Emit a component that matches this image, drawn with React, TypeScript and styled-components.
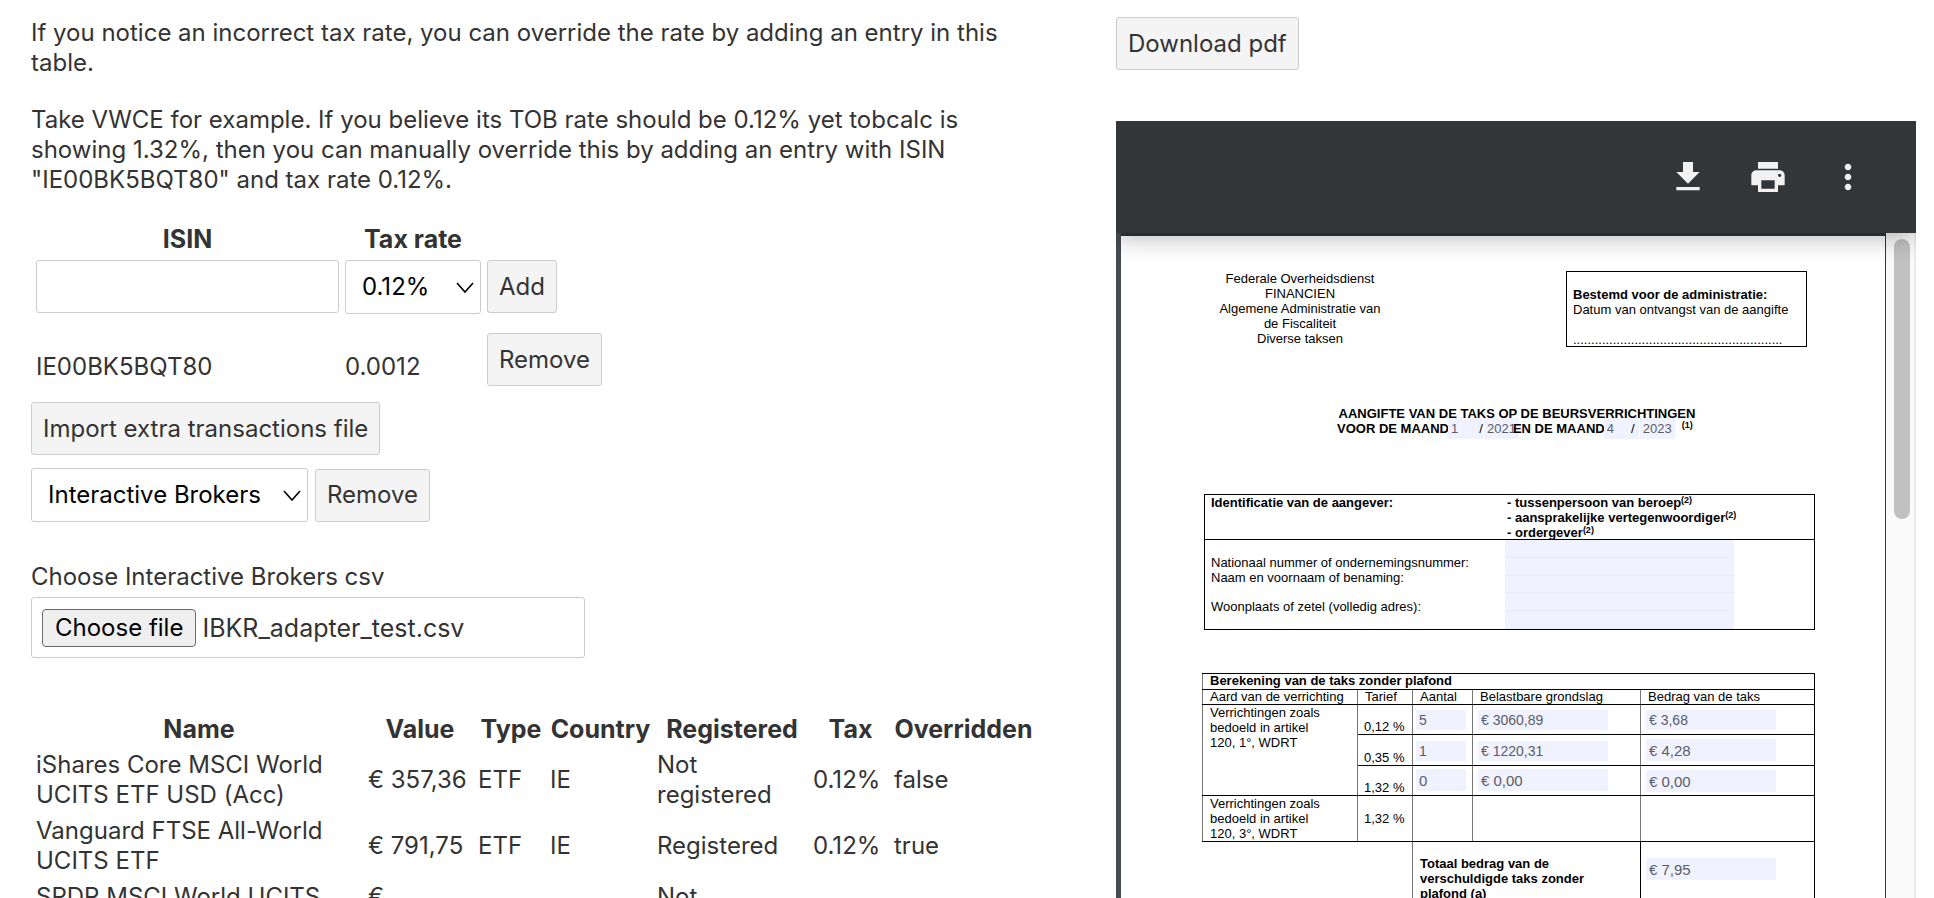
import React from "react";
import styled, { createGlobalStyle, css } from "styled-components";

const GlobalStyle = createGlobalStyle`
  *, *::before, *::after { box-sizing: border-box; }
  body {
    margin: 0;
    background: #fff;
    color: #333;
    font-family: Inter, "Liberation Sans", sans-serif;
    font-size: 24px;
    line-height: 30px;
  }
  th { font-size: 25px; }
`;

const Page = styled.main`
  display: grid;
  grid-template-columns: minmax(0, 1007fr) minmax(0, 800fr);
  column-gap: 78px;
  height: 100vh;
  padding: 0 18px 0 31px;
  overflow: hidden;
`;

const Column = styled.section<{ $top: number }>`
  display: flex;
  flex-direction: column;
  align-items: flex-start;
  min-width: 0;
  min-height: 0;
  padding-top: ${(p) => p.$top}px;
`;

const Paragraph = styled.p`
  margin: 0 0 27px;
`;

const controlBox = css`
  height: 53px;
  border: 1px solid #ccc;
  border-radius: 3px;
  font: inherit;
`;

const Button = styled.button`
  ${controlBox}
  flex: none;
  padding: 0 11px;
  background: #f4f4f4;
  color: #333;
  white-space: nowrap;
`;

const TextInput = styled.input`
  ${controlBox}
  display: block;
  width: 303px;
  padding: 0 10px;
  background: #fff;
`;

const SelectWrap = styled.span<{ $width: number }>`
  position: relative;
  display: block;
  width: ${(p) => p.$width}px;
`;

const SelectBox = styled.select`
  ${controlBox}
  display: block;
  width: 100%;
  height: 54px;
  padding: 0 16px;
  appearance: none;
  background: #fff;
  color: #000;
`;

const Chevron = styled.svg`
  position: absolute;
  top: 22px;
  right: 7px;
  width: 18px;
  height: 12px;
  fill: none;
  stroke: #000;
  stroke-width: 1.6;
  pointer-events: none;
`;

function Select({ width, label, options }: { width: number; label: string; options: string[] }) {
  return (
    <SelectWrap $width={width}>
      <SelectBox aria-label={label} defaultValue={options[0]}>
        {options.map((o) => (
          <option key={o}>{o}</option>
        ))}
      </SelectBox>
      <Chevron viewBox="0 0 18 12">
        <path d="M1 1 9 10 17 1" />
      </Chevron>
    </SelectWrap>
  );
}

const OverrideTable = styled.table`
  border-spacing: 4px;
  margin: -3px 0 0 0;
  th, td { padding: 1px; text-align: left; }
  th { text-align: center; }
  tbody td { height: 69px; }
  tbody tr:first-child td { vertical-align: top; }
  tbody tr:last-child td { height: 66px; }
`;

const EntryCell = styled.td`
  && { padding-top: 5px; }
`;

const ActionCell = styled.td`
  vertical-align: top;
  button { display: block; }
`;

const BrokerRow = styled.div`
  display: flex;
  align-items: center;
  gap: 7px;
  margin: 13px 0 40px;
`;

const FieldCaption = styled.label`
  margin-bottom: 5px;
`;

const HiddenFile = styled.input`
  position: absolute;
  opacity: 0;
  width: 1px;
  height: 1px;
`;

const FileBox = styled.label`
  display: flex;
  flex: none;
  align-items: center;
  gap: 6px;
  width: 554px;
  height: 61px;
  padding: 0 10px;
  border: 1px solid #ccc;
  border-radius: 3px;
  font-size: 25px;
`;

const FileButton = styled.span`
  height: 38px;
  padding: 3px 12px;
  border: 1px solid #6b6b6b;
  border-radius: 4px;
  background: #efefef;
  color: #000;
  font-size: 24px;
`;

const TransactionTable = styled.table`
  width: 100%;
  margin-top: 51px;
  table-layout: fixed;
  border-spacing: 4px;
  th, td { padding: 1px; text-align: left; }
  th { text-align: center; white-space: nowrap; }
  td:first-child { padding-right: 24px; }
`;

const Col = styled.col<{ $width?: number }>`
  width: ${(p) => (p.$width ? `${p.$width}px` : "auto")};
`;

/* PDF viewer */

const Viewer = styled.div`
  display: flex;
  flex-direction: column;
  flex: 1;
  width: 100%;
  min-height: 0;
  margin-top: 51px;
  overflow: hidden;
  background: #474c50;
`;

const Toolbar = styled.div`
  display: flex;
  position: relative;
  justify-content: flex-end;
  align-items: center;
  flex: none;
  gap: 40px;
  height: 112px;
  padding-right: 48px;
  background: #323639;
  box-shadow: 0 4px 24px rgba(0, 0, 0, 0.3);
`;

const IconButton = styled.button`
  width: 40px;
  height: 40px;
  padding: 0;
  border: 0;
  background: none;
  svg { display: block; fill: #f1f1f1; }
`;

const ViewerBody = styled.div`
  display: flex;
  flex: 1;
  min-height: 0;
  overflow: hidden;
`;

const Sheet = styled.article`
  flex: 1;
  min-width: 0;
  height: 1100px;
  margin-left: 5px;
  padding: 35px 70px 0 81px;
  border-top: 3px solid #323639;
  border-right: 1px solid #323639;
  background: #fff;
  color: #000;
  font-family: "Liberation Sans", Arial, sans-serif;
  font-size: 13px;
  line-height: 15px;
`;

const ScrollTrack = styled.div`
  flex: none;
  width: 30px;
  padding: 6px 6px 0 8px;
  border-right: 2px solid #ebebeb;
  background: #fafafa;
`;

const ScrollThumb = styled.div`
  width: 16px;
  height: 280px;
  border-radius: 8px;
  background: #c1c1c1;
`;

const Letterhead = styled.header`
  display: flex;
  justify-content: space-between;
  align-items: flex-start;
  padding: 0 8px 0 13px;
`;

const Sender = styled.address`
  width: 170px;
  font-style: normal;
  text-align: center;
`;

const AdminBox = styled.div`
  width: 241px;
  height: 76px;
  padding: 15px 6px 0;
  border: 1px solid #000;
  white-space: nowrap;
`;

const Dots = styled.div`
  margin-top: 15px;
`;

const TitleBlock = styled.h2`
  display: flex;
  flex-direction: column;
  align-items: center;
  margin: 59px 0 58px;
  padding-left: 17px;
  font-size: 13px;
  line-height: 15px;
  white-space: nowrap;
`;

const Period = styled.div`
  display: flex;
  align-items: flex-start;
  gap: 1px;
  width: 360px;
  height: 15px;
`;

const PeriodText = styled.span<{ $overlap?: boolean }>`
  position: relative;
  margin-left: ${(p) => (p.$overlap ? "-7px" : "0")};
  margin-right: -2px;
`;

const PeriodField = styled.span`
  position: relative;
  width: 35px;
  margin-top: -3px;
`;

const Slash = styled.span<{ $inset?: boolean }>`
  position: absolute;
  right: ${(p) => (p.$inset ? 4 : 0)}px;
  top: 3px;
  font-weight: 400;
`;

const Input = styled.input<{ $size?: number; $width?: string; $height?: number }>`
  display: block;
  width: ${(p) => p.$width ?? "100%"};
  height: ${(p) => p.$height ?? 21}px;
  padding: 0 3px;
  border: 0;
  border-radius: 0;
  background: #f0f2ff;
  color: #5a5c68;
  font-family: "Liberation Sans", Arial, sans-serif;
  font-size: ${(p) => p.$size ?? 13}px;
`;

const NoteRef = styled.sup`
  font-size: 9px;
  line-height: 9px;
  vertical-align: 4px;
`;

const PeriodNote = styled.sup`
  margin-left: 6px;
  font-size: 9px;
  line-height: 9px;
`;

const Identity = styled.section`
  margin-left: 2px;
  border: 1px solid #000;
`;

const IdentityRow = styled.div<{ $ruled?: boolean }>`
  display: grid;
  grid-template-columns: 294px 229px;
  padding-left: 6px;
  border-bottom: ${(p) => (p.$ruled ? "1px solid #000" : "0")};
  font-weight: ${(p) => (p.$ruled ? 700 : 400)};
`;

const Roles = styled.ul`
  margin: 0;
  padding: 0 0 0 2px;
  list-style: none;
  white-space: nowrap;
  li { height: 15px; }
  li:last-child { height: 14px; }
`;

const Labels = styled.div`
  display: flex;
  flex-direction: column;
  padding: 15px 0;
  label:last-child { margin-top: 14px; }
`;

const Lines = styled.div`
  display: flex;
  flex-direction: column;
  height: 89px;
  input { border-bottom: 1px solid #e9ebfd; }
`;

const TaxTable = styled.table`
  width: 100%;
  margin-top: 43px;
  table-layout: fixed;
  border-collapse: collapse;
  th, td {
    padding: 0 5px 0 7px;
    border: 1px solid #777;
    border-top-color: #000;
    border-bottom-color: #000;
    text-align: left;
    font-size: 13px;
    font-weight: 400;
    vertical-align: top;
    white-space: nowrap;
  }
  thead th { line-height: 14px; }
  thead th[colspan] { font-weight: 700; }
  th:last-child, td:last-child { border-right-color: #000; }
`;

const TaxRow = styled.tr<{ $height: number }>`
  height: ${(p) => p.$height}px;
`;

const RateCell = styled.td<{ $middle?: boolean }>`
  && {
    padding-left: 6px;
    vertical-align: ${(p) => (p.$middle ? "middle" : "bottom")};
  }
`;

const FieldCell = styled.td<{ $top: number }>`
  && { padding: ${(p) => p.$top}px 5px 0; }
`;

const CountCell = styled.td<{ $top: number }>`
  && { padding: ${(p) => p.$top}px 5px 0 3px; }
`;

const Blank = styled.td`
  && { border-left: 0; border-bottom: 0; }
`;

const TotalCell = styled.td`
  && {
    padding-top: 14px;
    border-left-color: #000;
    border-right-color: #000;
    font-weight: 700;
  }
`;

const transactions = [
  ["iShares Core MSCI World UCITS ETF USD (Acc)", "€ 357,36", "ETF", "IE", "Not registered", "0.12%", "false"],
  ["Vanguard FTSE All-World UCITS ETF", "€ 791,75", "ETF", "IE", "Registered", "0.12%", "true"],
  ["SPDR MSCI World UCITS ETF", "€ 1.911,78", "ETF", "IE", "Not registered", "0.12%", "false"],
];

const taxRows = [
  { rate: "0,12 %", row: 30, values: ["5", "€ 3060,89", "€ 3,68"], sizes: [14, 14, 14], tops: [5, 5, 5], heights: [20, 20, 20] },
  { rate: "0,35 %", row: 31, values: ["1", "€ 1220,31", "€ 4,28"], sizes: [14, 14, 15], tops: [6, 6, 4], heights: [20, 20, 22] },
  { rate: "1,32 %", row: 30, values: ["0", "€ 0,00", "€ 0,00"], sizes: [15, 15, 15], tops: [3, 3, 4], heights: [22, 22, 22] },
];

export default function App() {
  return (
    <>
      <GlobalStyle />
      <Page>
        <Column $top={18}>
          <Paragraph>
            If you notice an incorrect tax rate, you can override the rate by adding an entry in this table.
          </Paragraph>
          <Paragraph>
            Take VWCE for example. If you believe its TOB rate should be 0.12% yet tobcalc is showing 1.32%, then you
            can manually override this by adding an entry with ISIN "IE00BK5BQT80" and tax rate 0.12%.
          </Paragraph>

          <OverrideTable>
            <thead>
              <tr>
                <th>ISIN</th>
                <th>Tax rate</th>
                <td />
              </tr>
            </thead>
            <tbody>
              <tr>
                <td>
                  <TextInput aria-label="ISIN" />
                </td>
                <td>
                  <Select width={136} label="Tax rate" options={["0.12%", "0.35%", "1.32%"]} />
                </td>
                <ActionCell>
                  <Button>Add</Button>
                </ActionCell>
              </tr>
              <tr>
                <EntryCell>IE00BK5BQT80</EntryCell>
                <EntryCell>0.0012</EntryCell>
                <ActionCell>
                  <Button>Remove</Button>
                </ActionCell>
              </tr>
            </tbody>
          </OverrideTable>

          <Button>Import extra transactions file</Button>
          <BrokerRow>
            <Select width={277} label="Broker" options={["Interactive Brokers", "Bolero", "Degiro"]} />
            <Button>Remove</Button>
          </BrokerRow>

          <FieldCaption htmlFor="csv">Choose Interactive Brokers csv</FieldCaption>
          <FileBox>
            <HiddenFile id="csv" type="file" accept=".csv" />
            <FileButton>Choose file</FileButton>
            IBKR_adapter_test.csv
          </FileBox>

          <TransactionTable>
            <colgroup>
              <Col />
              <Col $width={106} />
              <Col $width={68} />
              <Col $width={103} />
              <Col $width={152} />
              <Col $width={77} />
              <Col $width={141} />
            </colgroup>
            <thead>
              <tr>
                {["Name", "Value", "Type", "Country", "Registered", "Tax", "Overridden"].map((h) => (
                  <th key={h}>{h}</th>
                ))}
              </tr>
            </thead>
            <tbody>
              {transactions.map((row) => (
                <tr key={row[0]}>
                  {row.map((cell, i) => (
                    <td key={i}>{cell}</td>
                  ))}
                </tr>
              ))}
            </tbody>
          </TransactionTable>
        </Column>

        <Column $top={17}>
          <Button>Download pdf</Button>
          <Viewer>
            <Toolbar>
              <IconButton aria-label="Download">
                <svg viewBox="0 0 24 24" width="40" height="40">
                  <path d="M19 9h-4V3H9v6H5l7 7 7-7zM5 18v2h14v-2H5z" />
                </svg>
              </IconButton>
              <IconButton aria-label="Print">
                <svg viewBox="0 0 24 24" width="40" height="40">
                  <path d="M19 8H5c-1.660 0-3 1.340-3 3v6h4v4h12v-4h4v-6c0-1.660-1.340-3-3-3zm-3 11H8v-5h8v5zm3-7c-.55 0-1-.45-1-1s.45-1 1-1 1 .45 1 1-.45 1-1 1zm-1-9H6v4h12V3z" />
                </svg>
              </IconButton>
              <IconButton aria-label="More actions">
                <svg viewBox="0 0 24 24" width="40" height="40">
                  <path d="M12 8c1.100 0 2-.9 2-2s-.9-2-2-2-2 .9-2 2 .9 2 2 2zm0 2c-1.100 0-2 .9-2 2s.9 2 2 2 2-.9 2-2-.9-2-2-2zm0 6c-1.100 0-2 .9-2 2s.9 2 2 2 2-.9 2-2-.9-2-2-2z" />
                </svg>
              </IconButton>
            </Toolbar>
            <ViewerBody>
              <Sheet>
                <Letterhead>
                  <Sender>
                    Federale Overheidsdienst
                    <br />
                    FINANCIEN
                    <br />
                    Algemene Administratie van
                    <br />
                    de Fiscaliteit
                    <br />
                    Diverse taksen
                  </Sender>
                  <AdminBox>
                    <b>Bestemd voor de administratie:</b>
                    <br />
                    Datum van ontvangst van de aangifte
                    <Dots>{".".repeat(58)}</Dots>
                  </AdminBox>
                </Letterhead>

                <TitleBlock>
                  AANGIFTE VAN DE TAKS OP DE BEURSVERRICHTINGEN
                  <Period>
                    <PeriodText>VOOR DE MAAND</PeriodText>
                    <PeriodField>
                      <Input aria-label="Start month" defaultValue="1" />
                      <Slash>/</Slash>
                    </PeriodField>
                    <PeriodField>
                      <Input aria-label="Start year" defaultValue="2021" />
                    </PeriodField>
                    <PeriodText $overlap>EN DE MAAND</PeriodText>
                    <PeriodField>
                      <Input aria-label="End month" defaultValue="4" />
                      <Slash $inset>/</Slash>
                    </PeriodField>
                    <PeriodField>
                      <Input aria-label="End year" defaultValue="2023" />
                    </PeriodField>
                    <PeriodNote>(1)</PeriodNote>
                  </Period>
                </TitleBlock>

                <Identity>
                  <IdentityRow $ruled>
                    <span>Identificatie van de aangever:</span>
                    <Roles>
                      {["tussenpersoon van beroep", "aansprakelijke vertegenwoordiger", "ordergever"].map((r) => (
                        <li key={r}>
                          - {r}
                          <NoteRef>(2)</NoteRef>
                        </li>
                      ))}
                    </Roles>
                  </IdentityRow>
                  <IdentityRow>
                    <Labels>
                      <label htmlFor="number">Nationaal nummer of ondernemingsnummer:</label>
                      <label htmlFor="name">Naam en voornaam of benaming:</label>
                      <label htmlFor="address">Woonplaats of zetel (volledig adres):</label>
                    </Labels>
                    <Lines>
                      <Input id="number" $height={18} />
                      <Input id="name" $height={18} />
                      <Input aria-label="Name, second line" $height={18} />
                      <Input id="address" $height={18} />
                      <Input aria-label="Address, second line" $height={18} />
                    </Lines>
                  </IdentityRow>
                </Identity>

                <TaxTable>
                  <colgroup>
                    <Col $width={155} />
                    <Col $width={55} />
                    <Col $width={60} />
                    <Col $width={168} />
                    <Col />
                  </colgroup>
                  <thead>
                    <TaxRow $height={16}>
                      <th colSpan={5}>Berekening van de taks zonder plafond</th>
                    </TaxRow>
                    <TaxRow $height={15}>
                      {["Aard van de verrichting", "Tarief", "Aantal", "Belastbare grondslag", "Bedrag van de taks"].map(
                        (h) => (
                          <th key={h}>{h}</th>
                        )
                      )}
                    </TaxRow>
                  </thead>
                  <tbody>
                    {taxRows.map((r, i) => (
                      <TaxRow key={r.rate} $height={r.row}>
                        {i === 0 && (
                          <td rowSpan={3}>
                            Verrichtingen zoals
                            <br />
                            bedoeld in artikel
                            <br />
                            120, 1°, WDRT
                          </td>
                        )}
                        <RateCell>{r.rate}</RateCell>
                        {r.values.map((v, c) => {
                          const Cell = c === 0 ? CountCell : FieldCell;
                          return (
                            <Cell key={c} $top={r.tops[c]}>
                              <Input
                                aria-label={`${r.rate} ${["aantal", "grondslag", "bedrag"][c]}`}
                                defaultValue={v}
                                $size={r.sizes[c]}
                                $height={r.heights[c]}
                                $width={c === 0 ? "50px" : "130px"}
                              />
                            </Cell>
                          );
                        })}
                      </TaxRow>
                    ))}
                    <TaxRow $height={45}>
                      <td>
                        Verrichtingen zoals
                        <br />
                        bedoeld in artikel
                        <br />
                        120, 3°, WDRT
                      </td>
                      <RateCell $middle>1,32 %</RateCell>
                      <td />
                      <td />
                      <td />
                    </TaxRow>
                    <TaxRow $height={75}>
                      <Blank colSpan={2} />
                      <TotalCell colSpan={2}>
                        Totaal bedrag van de
                        <br />
                        verschuldigde taks zonder
                        <br />
                        plafond (a)
                      </TotalCell>
                      <FieldCell $top={16}>
                        <Input aria-label="Totaal bedrag" defaultValue="€ 7,95" $size={15} $height={22} $width="130px" />
                      </FieldCell>
                    </TaxRow>
                  </tbody>
                </TaxTable>
              </Sheet>
              <ScrollTrack>
                <ScrollThumb />
              </ScrollTrack>
            </ViewerBody>
          </Viewer>
        </Column>
      </Page>
    </>
  );
}
